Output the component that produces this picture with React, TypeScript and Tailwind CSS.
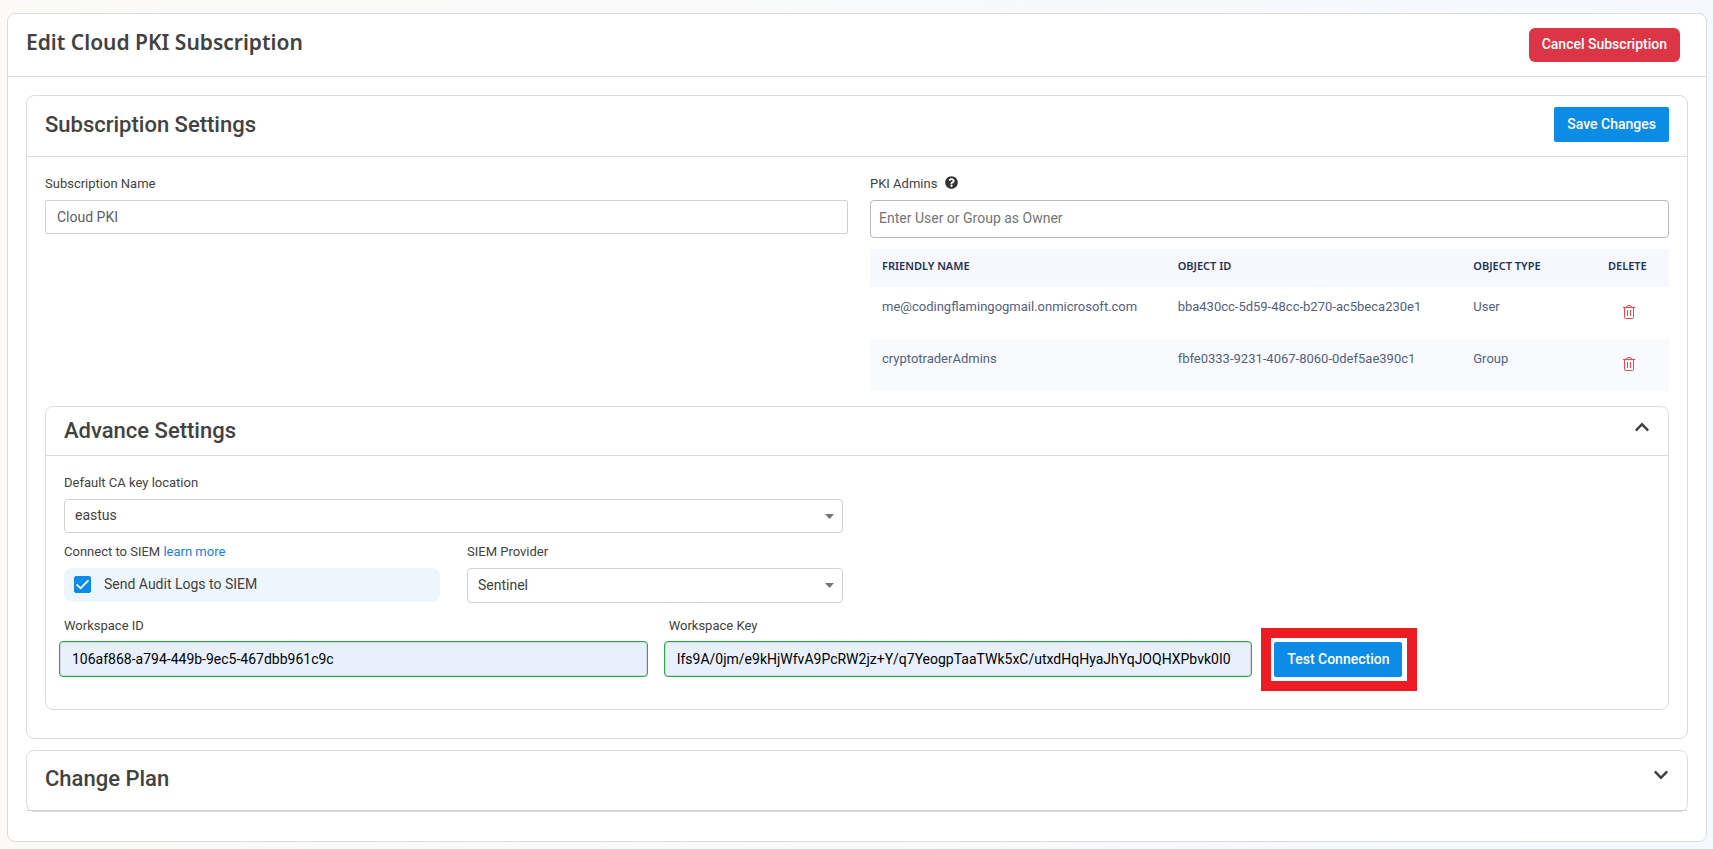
import { useState } from 'react'
import type { ReactNode } from 'react'
import { FaChevronDown, FaChevronUp, FaQuestionCircle } from 'react-icons/fa'

type Admin = {
  name: string
  objectId: string
  objectType: 'User' | 'Group'
}

const initialAdmins: Admin[] = [
  { name: 'me@codingflamingogmail.onmicrosoft.com', objectId: 'bba430cc-5d59-48cc-b270-ac5beca230e1', objectType: 'User' },
  { name: 'cryptotraderAdmins', objectId: 'fbfe0333-9231-4067-8060-0def5ae390c1', objectType: 'Group' },
]

const labelClass = 'block text-[13px] leading-4 text-[#424242]'
const titleClass = 'text-[22px] leading-7 font-medium text-[#424242]'
const primaryButtonClass = 'block h-[35px] rounded-xs bg-[#0c8ce6] px-[13px] pb-[2px] text-sm font-medium text-white'
const validInputClass =
  'mt-[7px] block h-9 w-full rounded border border-[#28a745] bg-[#e8f0fe] px-3 text-sm text-black shadow-[inset_0_0_0_1px_#d3d9e4] outline-none'

function TrashIcon() {
  return (
    <svg className="h-[14px] w-3" viewBox="0 0 12 14" fill="none" stroke="currentColor" aria-hidden="true">
      <path d="M0 2.5h12" strokeWidth="1.2" />
      <path d="M3.5 2.2l.6-1.2c.1-.3.4-.5.7-.5h2.4c.3 0 .6.2.7.5l.6 1.2M1.5 2.5v10c0 .6.4 1 1 1h7c.6 0 1-.4 1-1v-10M4.5 5v6M7.5 5v6" />
    </svg>
  )
}

type SelectProps = {
  id: string
  value: string
  options: string[]
  className: string
  onChange: (value: string) => void
}

function Select({ id, value, options, className, onChange }: SelectProps) {
  return (
    <div className="relative mt-2">
      <select
        id={id}
        className={`block w-full appearance-none rounded border border-[#cdd1d9] bg-white px-[10px] pb-[2px] text-sm text-[#424242] outline-none ${className}`}
        value={value}
        onChange={(event) => onChange(event.target.value)}
      >
        {options.map((option) => (
          <option key={option} value={option}>
            {option}
          </option>
        ))}
      </select>
      <svg className="pointer-events-none absolute top-[15px] right-[9px] h-[5px] w-[9px]" viewBox="0 0 9 5" aria-hidden="true">
        <path d="M0 0h9L4.5 5z" fill="#757575" />
      </svg>
    </div>
  )
}

function Card({ className, children }: { className?: string; children: ReactNode }) {
  return <section className={`rounded-lg border border-[#dcdcdc] ${className ?? ''}`}>{children}</section>
}

export default function App() {
  const [name, setName] = useState('Cloud PKI')
  const [owner, setOwner] = useState('')
  const [admins, setAdmins] = useState(initialAdmins)
  const [advancedOpen, setAdvancedOpen] = useState(true)
  const [planOpen, setPlanOpen] = useState(false)
  const [location, setLocation] = useState('eastus')
  const [sendLogs, setSendLogs] = useState(true)
  const [provider, setProvider] = useState('Sentinel')
  const [workspaceId, setWorkspaceId] = useState('106af868-a794-449b-9ec5-467dbb961c9c')
  const [workspaceKey, setWorkspaceKey] = useState(
    'Ifs9A/0jm/e9kHjWfvA9PcRW2jz+Y/q7YeogpTaaTWk5xC/utxdHqHyaJhYqJOQHXPbvk0I0',
  )

  return (
    <div className="min-h-screen bg-linear-to-r from-[#fbfaf7] to-[#f5f8fd] pt-[13px] pr-[6px] pb-[7px] pl-[7px] font-['Roboto',sans-serif]">
      <main className="rounded-lg border border-[#dcdcdc] bg-white">
        <header className="flex items-start justify-between border-b border-[#dcdcdc] pt-[14px] pr-[26px] pb-[14px] pl-[18px]">
          <h1 className="font-['Noto_Sans',sans-serif] text-[21px] leading-7 font-semibold text-[#424242]">
            Edit Cloud PKI Subscription
          </h1>
          <button type="button" className="h-[34px] rounded-md bg-[#dc3545] px-[13px] pb-[2px] text-sm font-medium text-white">
            Cancel Subscription
          </button>
        </header>

        <div className="px-[18px] pt-[18px] pb-[29px]">
          <Card>
            <div className="flex items-start justify-between border-b border-[#dcdcdc] px-[18px] pt-[11px] pb-[14px]">
              <h2 className={`pt-1 ${titleClass}`}>Subscription Settings</h2>
              <button type="button" className={primaryButtonClass}>
                Save Changes
              </button>
            </div>

            <div className="px-[18px] pt-[19px] pb-7">
              <div className="grid grid-cols-[803fr_799fr] gap-[22px]">
                <div>
                  <label htmlFor="subscription-name" className={labelClass}>
                    Subscription Name
                  </label>
                  <input
                    id="subscription-name"
                    className="mt-2 block h-[34px] w-full rounded-xs border border-[#cdd1d9] px-[11px] text-sm text-[#5a6169] outline-none"
                    value={name}
                    onChange={(event) => setName(event.target.value)}
                  />
                </div>

                <div>
                  <div className="flex items-start gap-2">
                    <label htmlFor="pki-admins" className={labelClass}>
                      PKI Admins
                    </label>
                    <FaQuestionCircle className="size-[13px] text-[#333333]" />
                  </div>
                  <input
                    id="pki-admins"
                    className="mt-2 block h-[38px] w-full rounded border border-[#b8b8b8] px-2 pb-[2px] text-sm text-[#424242] outline-none placeholder:text-[#757575]"
                    placeholder="Enter User or Group as Owner"
                    value={owner}
                    onChange={(event) => setOwner(event.target.value)}
                  />
                  <table className="mt-[11px] w-full table-fixed text-left">
                    <thead>
                      <tr className="h-[38px] bg-[#f6f8fd] font-['Noto_Sans',sans-serif] text-[11px] text-[#1f3354] uppercase">
                        <th className="w-[37%] px-3 pb-1 font-semibold">Friendly Name</th>
                        <th className="w-[37%] px-3 pb-1 font-semibold">Object ID</th>
                        <th className="px-3 pb-1 font-semibold">Object Type</th>
                        <th className="w-[73px] pr-5 pb-1 pl-3 font-semibold">Delete</th>
                      </tr>
                    </thead>
                    <tbody>
                      {admins.map((admin) => (
                        <tr key={admin.objectId} className="h-[52px] align-top text-[13px] leading-4 text-[#525f7f] even:bg-[#f9fafe]">
                          <td className="px-3 pt-3">{admin.name}</td>
                          <td className="px-3 pt-3">{admin.objectId}</td>
                          <td className="px-3 pt-3">{admin.objectType}</td>
                          <td className="pt-[18px] pr-5 pl-3">
                            <button
                              type="button"
                              aria-label={`Delete ${admin.name}`}
                              className="mx-auto block text-[#e5484d]"
                              onClick={() => setAdmins(admins.filter((item) => item !== admin))}
                            >
                              <TrashIcon />
                            </button>
                          </td>
                        </tr>
                      ))}
                    </tbody>
                  </table>
                </div>
              </div>

              <Card className="mt-[15px]">
                <div className="flex items-start justify-between border-b border-[#dcdcdc] px-[18px] py-[10px]">
                  <h2 className={titleClass}>Advance Settings</h2>
                  <button
                    type="button"
                    aria-label="Toggle advance settings"
                    className="pt-[2px]"
                    onClick={() => setAdvancedOpen(!advancedOpen)}
                  >
                    {advancedOpen ? (
                      <FaChevronUp className="size-4 text-[#424242]" />
                    ) : (
                      <FaChevronDown className="size-4 text-[#424242]" />
                    )}
                  </button>
                </div>

                {advancedOpen ? (
                  <div className="px-[18px] pt-[19px] pb-8">
                    <div className="w-[calc(50%-14px)]">
                      <label htmlFor="key-location" className={labelClass}>
                        Default CA key location
                      </label>
                      <Select
                        id="key-location"
                        className="h-[34px]"
                        value={location}
                        options={['eastus', 'westus', 'northeurope']}
                        onChange={setLocation}
                      />
                      <div className="mt-[11px] grid grid-cols-2 gap-[27px]">
                        <div>
                          <p className={labelClass}>
                            Connect to SIEM{' '}
                            <a href="#" className="text-[#1a7fe0]">
                              learn more
                            </a>
                          </p>
                          <label className="mt-2 flex h-[34px] items-center gap-[13px] rounded-lg bg-[#edf5fd] pb-[2px] pl-[10px] text-sm text-[#424242]">
                            <span className="relative size-[17px]">
                              <input
                                type="checkbox"
                                className="block size-[17px] appearance-none rounded-xs border border-[#0c8ce6] bg-white checked:bg-[#0c8ce6]"
                                checked={sendLogs}
                                onChange={(event) => setSendLogs(event.target.checked)}
                              />
                              {sendLogs ? (
                                <svg
                                  className="pointer-events-none absolute inset-0 size-[17px]"
                                  viewBox="0 0 17 17"
                                  fill="none"
                                  stroke="white"
                                  strokeWidth="1.8"
                                  aria-hidden="true"
                                >
                                  <path d="M2.6 8.4l3.9 3.9L14.4 4.4" />
                                </svg>
                              ) : null}
                            </span>
                            Send Audit Logs to SIEM
                          </label>
                        </div>
                        <div>
                          <label htmlFor="siem-provider" className={labelClass}>
                            SIEM Provider
                          </label>
                          <Select
                            id="siem-provider"
                            className="h-[35px]"
                            value={provider}
                            options={['Sentinel', 'Splunk']}
                            onChange={setProvider}
                          />
                        </div>
                      </div>
                    </div>

                    <div className="mt-[15px] -ml-[5px] flex items-end gap-4">
                      <div className="w-[37%]">
                        <label htmlFor="workspace-id" className={`pl-[5px] ${labelClass}`}>
                          Workspace ID
                        </label>
                        <input
                          id="workspace-id"
                          className={validInputClass}
                          value={workspaceId}
                          onChange={(event) => setWorkspaceId(event.target.value)}
                        />
                      </div>
                      <div className="w-[37%]">
                        <label htmlFor="workspace-key" className={`pl-[5px] ${labelClass}`}>
                          Workspace Key
                        </label>
                        <input
                          id="workspace-key"
                          className={validInputClass}
                          value={workspaceKey}
                          onChange={(event) => setWorkspaceKey(event.target.value)}
                        />
                      </div>
                      <div className="relative ml-[6px]">
                        <button type="button" className={primaryButtonClass}>
                          Test Connection
                        </button>
                        <span className="pointer-events-none absolute -inset-y-[14px] -right-[15px] -left-[13px] border-[10px] border-[#ed1c24]" />
                      </div>
                    </div>
                  </div>
                ) : null}
              </Card>
            </div>
          </Card>

          <Card className="mt-[11px]">
            <div className="flex items-start justify-between border-b border-[#d0d0d0] px-[18px] pt-[14px] pb-[17px]">
              <h2 className={titleClass}>Change Plan</h2>
              <button type="button" aria-label="Toggle change plan" className="pt-[2px]" onClick={() => setPlanOpen(!planOpen)}>
                {planOpen ? (
                  <FaChevronUp className="size-4 text-[#424242]" />
                ) : (
                  <FaChevronDown className="size-4 text-[#424242]" />
                )}
              </button>
            </div>
          </Card>
        </div>
      </main>
    </div>
  )
}
